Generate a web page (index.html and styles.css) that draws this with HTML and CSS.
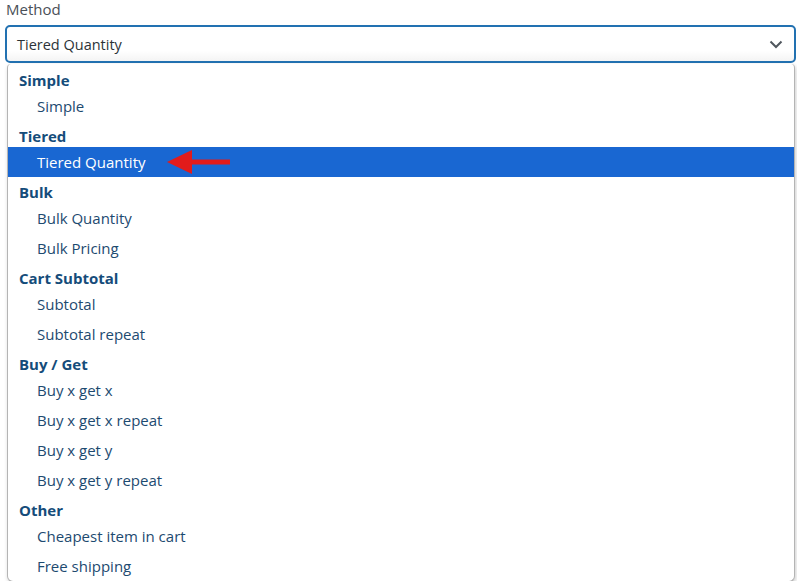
FILE: index.html
```html
<!DOCTYPE html>
<html lang="en">
<head>
  <meta charset="UTF-8" />
  <title>Method</title>
  <link rel="stylesheet" href="styles.css">
</head>
<body>
  <div class="field">
    <label class="field-label">Method</label>
    <div class="select">
      <span class="select-value">Tiered Quantity</span>
      <svg class="chevron" width="14" height="9" viewBox="0 0 14 9">
        <path d="M1.5 1.5 L7 7 L12.5 1.5" fill="none" stroke="#50575e" stroke-width="2"/>
      </svg>
    </div>
    <ul class="dropdown">
      <li class="group">Simple</li>
      <li class="option">Simple</li>
      <li class="group">Tiered</li>
      <li class="option selected">
        Tiered Quantity
        <svg class="pointer" width="64" height="26" viewBox="0 0 64 26">
          <polygon points="0,13 25,1 25,25" fill="#e21b1b"/>
          <rect x="24" y="10.5" width="39" height="5" fill="#e21b1b"/>
        </svg>
      </li>
      <li class="group">Bulk</li>
      <li class="option">Bulk Quantity</li>
      <li class="option">Bulk Pricing</li>
      <li class="group">Cart Subtotal</li>
      <li class="option">Subtotal</li>
      <li class="option">Subtotal repeat</li>
      <li class="group">Buy / Get</li>
      <li class="option">Buy x get x</li>
      <li class="option">Buy x get x repeat</li>
      <li class="option">Buy x get y</li>
      <li class="option">Buy x get y repeat</li>
      <li class="group">Other</li>
      <li class="option">Cheapest item in cart</li>
      <li class="option">Free shipping</li>
    </ul>
  </div>
</body>
</html>
```

FILE: styles.css
```css
* {
  box-sizing: border-box;
  margin: 0;
  padding: 0;
}

body {
  background: #fff;
  font-family: 'Open Sans', sans-serif;
  overflow: hidden;
}

.field {
  margin-left: 5px;
  width: 791px;
}

.field-label {
  display: block;
  font-size: 15px;
  font-weight: 500;
  line-height: 18px;
  color: #4a5057;
  padding-left: 1px;
  margin-bottom: 7px;
}

.select {
  display: flex;
  align-items: center;
  justify-content: space-between;
  height: 38px;
  border: 2px solid #2271b1;
  border-radius: 5px;
  padding: 0 11px 0 10px;
  background: linear-gradient(#fff 70%, #f4f4f4);
}

.select-value {
  font-size: 14.5px;
  color: #2c3338;
}

.dropdown {
  list-style: none;
  margin: 1px 1px 0 2px;
  border: 1px solid #b4b4b4;
  border-top: none;
  border-radius: 4px 4px 6px 6px;
  box-shadow: 1px 2px 4px rgba(0, 0, 0, 0.2);
  background: #fff;
  padding-top: 1px;
}

.group {
  height: 26px;
  line-height: 30px;
  padding-left: 11px;
  font-size: 15px;
  font-weight: bold;
  color: #154c7a;
}

.option {
  display: flex;
  align-items: center;
  height: 30px;
  padding-left: 29px;
  font-size: 15px;
  color: #1d4a70;
}

.option.selected {
  background: #1967d2;
  color: #fff;
}

.pointer {
  margin-left: 21px;
}
```
